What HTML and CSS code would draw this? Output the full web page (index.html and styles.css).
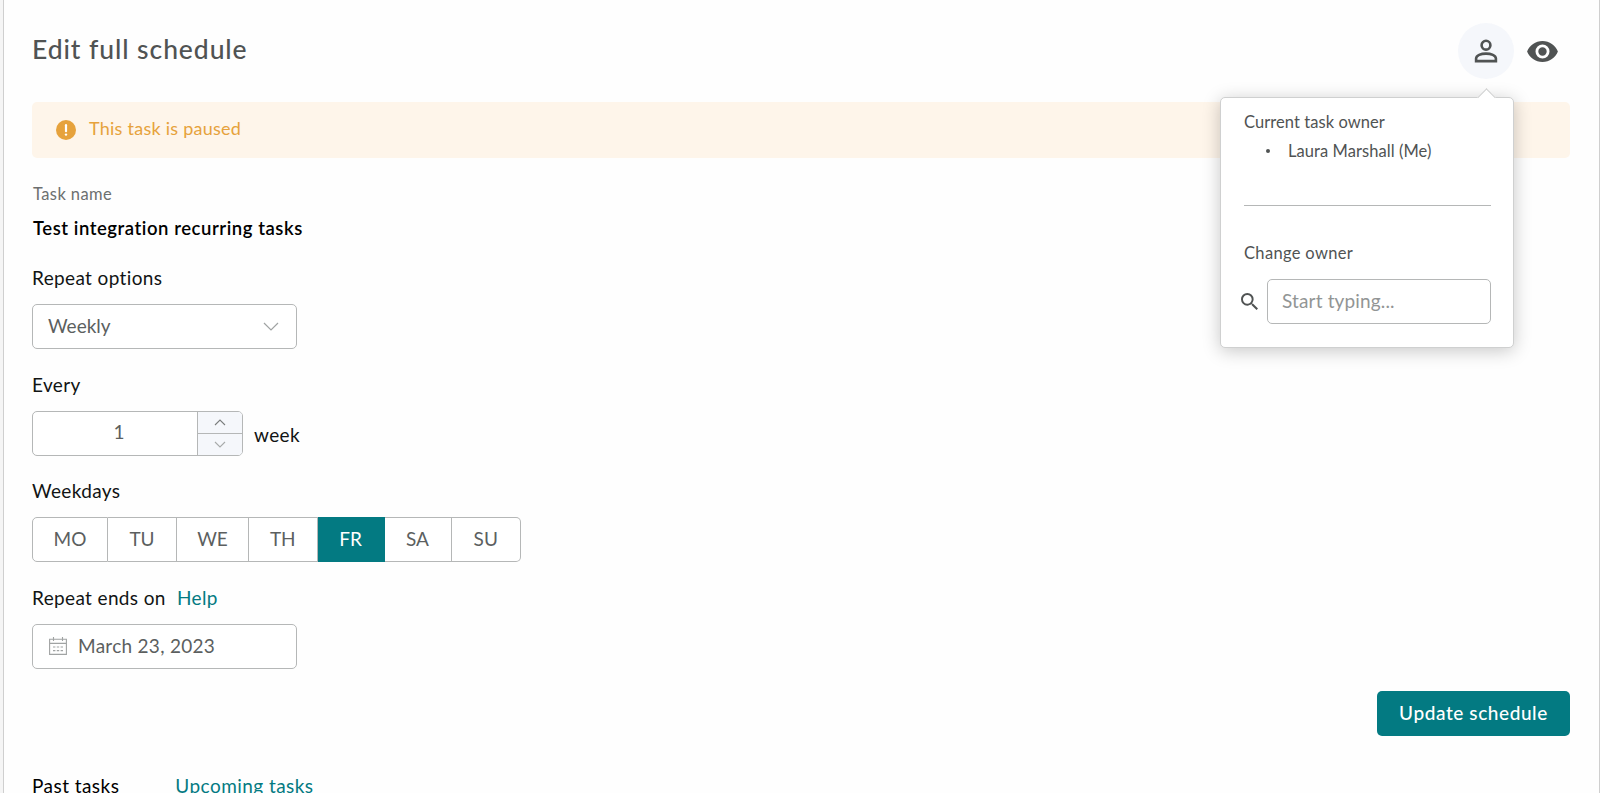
FILE: index.html
```html
<!DOCTYPE html>
<html lang="en">

<head>
    <meta charset="UTF-8">
    <meta name="viewport" content="width=device-width, initial-scale=1.0">
    <title>Edit full schedule</title>
    <link rel="stylesheet" href="styles.css">
</head>

<body>
    <div class="page">
        <div class="header">
            <h1 class="page-title">Edit full schedule</h1>
            <div class="header-actions">
                <div class="owner">
                    <button class="icon-btn active" type="button" aria-label="Owner">
                        <svg width="24" height="24" viewBox="0 0 24 24" fill="none" stroke="#505353" stroke-width="2.6">
                            <circle cx="12" cy="6.2" r="4.4" />
                            <path d="M2.1 22.1v-2.5c0-3.2 4.9-5 9.9-5s9.9 1.8 9.9 5v2.5z" />
                        </svg>
                    </button>
                    <div class="popover">
                        <div class="arrow"></div>
                        <div class="pop-text">Current task owner</div>
                        <ul class="owner-list">
                            <li>Laura Marshall (Me)</li>
                        </ul>
                        <div class="line"></div>
                        <div class="pop-text change">Change owner</div>
                        <div class="search">
                            <svg class="search-icon" width="17" height="17" viewBox="3 3 17.5 17.5" fill="#505353">
                                <path d="M15.5 14h-.79l-.28-.27A6.47 6.47 0 0 0 16 9.5 6.5 6.5 0 1 0 9.5 16c1.61 0 3.09-.59 4.23-1.57l.27.28v.79l5 4.99L20.49 19l-4.99-5zm-6 0a4.5 4.5 0 1 1 0-9 4.5 4.5 0 0 1 0 9z" />
                            </svg>
                            <input class="search-input" type="text" placeholder="Start typing...">
                        </div>
                    </div>
                </div>
                <svg class="eye" width="31" height="21" viewBox="1 4.5 22 15" fill="#505353">
                    <path d="M12 4.5C7 4.5 2.73 7.61 1 12c1.73 4.39 6 7.5 11 7.5s9.27-3.11 11-7.5c-1.73-4.39-6-7.5-11-7.5zM12 17a5 5 0 1 1 0-10 5 5 0 0 1 0 10zm0-8a3 3 0 1 0 0 6 3 3 0 0 0 0-6z" />
                </svg>
            </div>
        </div>

        <div class="alert">
            <svg width="20" height="20" viewBox="0 0 20 20">
                <circle cx="10" cy="10" r="10" fill="#e6a23c" />
                <path d="M10 5.2v6" stroke="#fff" stroke-width="2.2" stroke-linecap="round" />
                <circle cx="10" cy="14.6" r="1.2" fill="#fff" />
            </svg>
            <span class="alert-text">This task is paused</span>
        </div>

        <div class="caption">Task name</div>
        <div class="task-name">Test integration recurring tasks</div>

        <div class="field">
            <div class="label">Repeat options</div>
            <div class="control select">
                <span>Weekly</span>
                <svg width="16" height="9" viewBox="0 0 16 9" fill="none" stroke="#a0a3a3" stroke-width="1.2">
                    <path d="M1 1l7 7 7-7" />
                </svg>
            </div>
        </div>

        <div class="field">
            <div class="label">Every</div>
            <div class="row">
                <div class="control number">
                    <div class="number-value">1</div>
                    <div class="steps">
                        <button class="step" type="button" aria-label="Increase">
                            <svg width="12" height="7" viewBox="0 0 12 7" fill="none" stroke="#7b7e7e" stroke-width="1.1">
                                <path d="M1 6l5-5 5 5" />
                            </svg>
                        </button>
                        <button class="step" type="button" aria-label="Decrease">
                            <svg width="12" height="7" viewBox="0 0 12 7" fill="none" stroke="#a8abab" stroke-width="1.1">
                                <path d="M1 1l5 5 5-5" />
                            </svg>
                        </button>
                    </div>
                </div>
                <span class="unit">week</span>
            </div>
        </div>

        <div class="field">
            <div class="label">Weekdays</div>
            <div class="weekdays">
                <button class="day" type="button">MO</button>
                <button class="day" type="button">TU</button>
                <button class="day" type="button">WE</button>
                <button class="day" type="button">TH</button>
                <button class="day selected" type="button">FR</button>
                <button class="day" type="button">SA</button>
                <button class="day" type="button">SU</button>
            </div>
        </div>

        <div class="field">
            <div class="label">Repeat ends on <a class="help">Help</a></div>
            <div class="control date">
                <svg width="18" height="18" viewBox="0 0 18 18" fill="none" stroke="#a0a3a3" stroke-width="1.1">
                    <path d="M.6 2.2h16.8v15.2H.6zM.6 6.4h16.8M4.5 0v4M13.5 0v4" />
                    <path d="M4 10h2.4M7.8 10h2.4M11.6 10H14M4 13.6h2.4M7.8 13.6h2.4M11.6 13.6H14" />
                </svg>
                <span>March 23, 2023</span>
            </div>
        </div>

        <div class="footer">
            <button class="update" type="button">Update schedule</button>
        </div>

        <div class="tabs">
            <a class="tab current">Past tasks</a>
            <a class="tab upcoming">Upcoming tasks</a>
        </div>
    </div>
</body>

</html>
```

FILE: styles.css
```css
* {
    box-sizing: border-box;
    margin: 0;
}

body {
    height: 793px;
    padding: 0 0 0 3px;
    overflow: hidden;
    background-color: #f5f5f5;
    color: #111414;
    font-family: Lato, "Liberation Sans", sans-serif;
    font-size: 19px;
}

button,
input {
    font-family: inherit;
    font-size: inherit;
}

.page {
    height: 830px;
    padding: 0 29px 0 28px;
    background-color: #fefefe;
    border-left: 1px solid #cfcfcf;
    border-right: 1px solid #cfcfcf;
}

.header {
    display: flex;
    justify-content: space-between;
    height: 102px;
    padding-top: 23px;
}

.page-title {
    height: 56px;
    line-height: 53px;
    color: #505353;
    font-size: 26.5px;
    font-weight: 500;
    letter-spacing: 0.92px;
}

.header-actions {
    display: flex;
    align-items: center;
    height: 56px;
    gap: 13px;
    padding-right: 12px;
}

.owner {
    position: relative;
}

.icon-btn {
    display: flex;
    align-items: center;
    justify-content: center;
    width: 56px;
    height: 56px;
    padding: 0;
    border: none;
    border-radius: 50%;
    background-color: #f5f7fb;
}

.popover {
    position: absolute;
    top: 74px;
    right: 0;
    z-index: 2;
    width: 294px;
    height: 251px;
    padding: 13px 22px 0 23px;
    background-color: #fff;
    border: 1px solid #cfd0d0;
    border-radius: 5px;
    box-shadow: 0 3px 18px rgba(0, 0, 0, 0.22);
    color: #505353;
    font-size: 16.5px;
    letter-spacing: 0.07px;
}

.arrow {
    position: absolute;
    top: -7px;
    right: 20px;
    width: 13px;
    height: 13px;
    background-color: #fff;
    border-top: 1px solid #cfd0d0;
    border-left: 1px solid #cfd0d0;
    transform: rotate(45deg);
}

.pop-text {
    height: 24px;
    line-height: 22px;
}

.pop-text.change {
    letter-spacing: 0.33px;
}

.owner-list {
    padding-left: 22px;
    margin-top: 4px;
    line-height: 24px;
    list-style: none;
}

.owner-list li {
    display: flex;
    align-items: center;
}

.owner-list li::before {
    content: "";
    width: 4px;
    height: 4px;
    margin-right: 18px;
    border-radius: 50%;
    background-color: #505353;
}

.line {
    margin-top: 42px;
    margin-bottom: 36px;
    border-top: 1px solid #b5b7b7;
}

.search {
    display: flex;
    align-items: center;
    gap: 9px;
    margin-top: 13px;
    margin-left: -3px;
}

.search-icon {
    flex-shrink: 0;
}

.search-input {
    flex-grow: 1;
    min-width: 0;
    height: 45px;
    padding: 0 14px 2px;
    border: 1px solid #b5b7b7;
    border-radius: 5px;
    font-size: 19px;
    letter-spacing: 0.15px;
}

.search-input::placeholder {
    color: #929595;
}

.alert {
    display: flex;
    align-items: center;
    gap: 13px;
    height: 56px;
    padding-left: 24px;
    border-radius: 5px;
    background-color: #fef5ea;
    color: #e6a23c;
    font-size: 18px;
}

.alert-text {
    padding-bottom: 4px;
    letter-spacing: 0.25px;
}

.caption {
    height: 24px;
    margin-top: 24px;
    padding-left: 1px;
    line-height: 24px;
    color: #6c6f6f;
    font-size: 16.5px;
    letter-spacing: 0.4px;
}

.task-name {
    height: 24px;
    margin-top: 10px;
    margin-bottom: 25.3px;
    padding-left: 1px;
    line-height: 24px;
    color: #000;
    font-size: 18.5px;
    font-weight: 600;
    letter-spacing: 0.55px;
}

.field {
    margin-bottom: 22.5px;
}

.label {
    height: 26px;
    margin-bottom: 13px;
    line-height: 26px;
    letter-spacing: 0.36px;
}

.help {
    margin-left: 6px;
    color: #037a82;
}

.row {
    display: flex;
    align-items: center;
    gap: 11px;
}

.unit {
    padding-top: 2px;
    letter-spacing: 0.4px;
}

.control {
    display: flex;
    width: 265px;
    height: 45px;
    border: 1px solid #b5b7b7;
    border-radius: 5px;
    background-color: #fff;
    color: #5c5f5f;
}

.select {
    align-items: center;
    justify-content: space-between;
    padding: 0 17px 0 15px;
}

.select span,
.date span {
    padding-bottom: 2px;
}

.number {
    width: 211px;
    overflow: hidden;
}

.number-value {
    flex-grow: 1;
    line-height: 40px;
    padding-left: 8px;
    text-align: center;
}

.steps {
    display: flex;
    flex-direction: column;
    width: 45px;
    border-left: 1px solid #b5b7b7;
}

.step {
    display: flex;
    flex: 1;
    align-items: center;
    justify-content: center;
    padding: 0;
    border: none;
    background-color: #f5f7fb;
}

.step + .step {
    border-top: 1px solid #b5b7b7;
}

.weekdays {
    display: grid;
    grid-template-columns: 76px 69px 72px 68.5px 67px 67px 69.5px;
    width: 489px;
    height: 45px;
}

.day {
    padding: 0 0 3px;
    border: solid #b5b7b7;
    border-width: 1px 1px 1px 0;
    background-color: #fff;
    color: #5c5f5f;
}

.day:first-child {
    border-left-width: 1px;
    border-radius: 5px 0 0 5px;
}

.day:last-child {
    border-radius: 0 5px 5px 0;
}

.day.selected {
    border-color: #037a82;
    background-color: #037a82;
    color: #fff;
}

.date {
    align-items: center;
    gap: 11px;
    padding-left: 16px;
    letter-spacing: 0.28px;
}

.footer {
    display: flex;
    justify-content: flex-end;
}

.update {
    width: 193px;
    height: 45px;
    padding: 0 0 2px;
    border: none;
    border-radius: 5px;
    background-color: #037a82;
    color: #fff;
    font-weight: 500;
    letter-spacing: 0.58px;
}

.tabs {
    display: flex;
    gap: 56px;
    margin-top: 36.7px;
    line-height: 26px;
    letter-spacing: 0.45px;
}

.tab.current {
    color: #000;
}

.upcoming {
    color: #037a82;
}
```
